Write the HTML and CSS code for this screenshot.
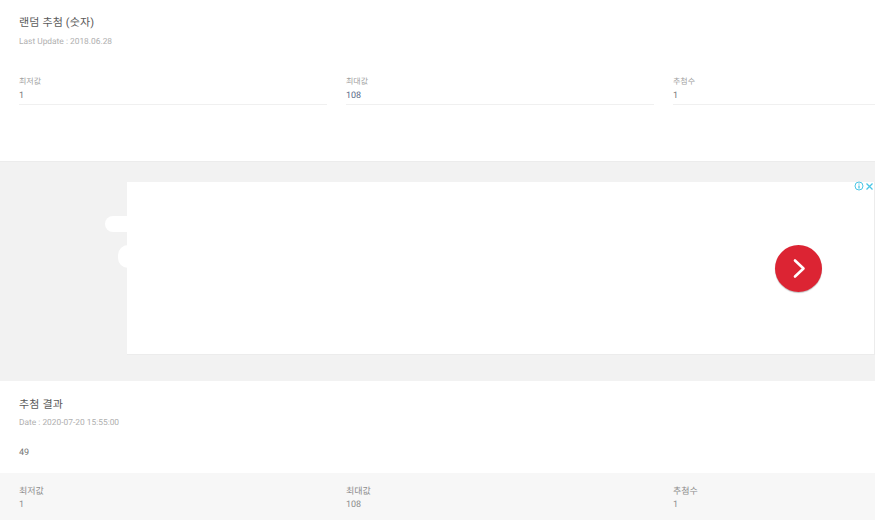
FILE: index.html
```html
<!DOCTYPE html>
<html lang="ko">
<head>
  <meta charset="utf-8">
  <title>랜덤 추첨 (숫자)</title>
  <link rel="stylesheet" href="styles.css">
</head>
<body>
  <section class="setup">
    <h2 class="title">랜덤 추첨 (숫자)</h2>
    <p class="sub">Last Update : 2018.06.28</p>
    <div class="fields">
      <div class="field">
        <div class="field-label">최저값</div>
        <div class="field-value">1</div>
      </div>
      <div class="field">
        <div class="field-label">최대값</div>
        <div class="field-value blue">108</div>
      </div>
      <div class="field">
        <div class="field-label">추첨수</div>
        <div class="field-value">1</div>
      </div>
    </div>
  </section>

  <!-- 광고 영역 -->
  <section class="ad-wrap">
    <span class="blob blob-top"></span>
    <span class="blob blob-bottom"></span>
    <div class="ad">
      <div class="ad-icons">
        <svg width="10" height="10" viewBox="0 0 10 10" fill="none" stroke="#4cc7e6">
          <circle cx="5" cy="5" r="4" stroke-width="1"/>
          <path d="M5 2.4v1.1M5 4.4v3.2" stroke-width="1.3"/>
        </svg>
        <svg width="9" height="9" viewBox="0 0 9 9" fill="none" stroke="#4cc7e6" stroke-width="1.3">
          <path d="M1.5 1.5l6 6M7.5 1.5l-6 6"/>
        </svg>
      </div>
      <div class="ad-next">
        <svg width="47" height="47" viewBox="0 0 47 47" fill="none" stroke="#fff" stroke-width="2.6" stroke-linecap="round" stroke-linejoin="round">
          <path d="M20 15.5l8.5 8-8.5 8"/>
        </svg>
      </div>
    </div>
  </section>

  <section class="result">
    <h2 class="title">추첨 결과</h2>
    <p class="sub">Date : 2020-07-20 15:55:00</p>
    <p class="number">49</p>
  </section>

  <section class="summary">
    <div class="fields">
      <div class="sum-item">
        <div class="sum-label">최저값</div>
        <div class="sum-value">1</div>
      </div>
      <div class="sum-item">
        <div class="sum-label">최대값</div>
        <div class="sum-value">108</div>
      </div>
      <div class="sum-item">
        <div class="sum-label">추첨수</div>
        <div class="sum-value">1</div>
      </div>
    </div>
  </section>
</body>
</html>
```

FILE: styles.css
```css
html, body {
  height: 520px;
  overflow: hidden;
}

body {
  margin: 0;
  background-color: #fff;
  font-family: Roboto, "Noto Sans CJK KR", sans-serif;
  color: #555;
  text-rendering: geometricPrecision;
}

h2, p {
  margin: 0;
}

.title {
  font-size: 11px;
  font-weight: 400;
  line-height: 16px;
  color: #5a5a5a;
  letter-spacing: 0.15px;
}

.sub {
  margin-top: 3px;
  font-size: 8.4px;
  line-height: 14px;
  color: #b0b0b0;
}

.fields {
  display: grid;
  grid-template-columns: 308px 308px 1fr;
  column-gap: 19px;
}

.setup {
  box-sizing: border-box;
  height: 162px;
  padding: 15px 0 0 19px;
  border-bottom: 1px solid #ececec;
}

.setup .sub {
  margin-top: 4px;
}

.setup .fields {
  margin-top: 26px;
}

.field {
  border-bottom: 1px solid #f0f0f0;
  height: 30px;
  box-sizing: border-box;
}

.field-label {
  font-size: 8px;
  line-height: 13px;
  color: #a0a0a0;
}

.field-value {
  margin-top: 2px;
  font-size: 9px;
  line-height: 13px;
  color: #777;
}

.blue {
  color: #5a6a88;
}

.ad-wrap {
  position: relative;
  display: flex;
  justify-content: flex-end;
  height: 219px;
  padding-top: 20px;
  box-sizing: border-box;
  background-color: #f2f2f2;
}

.ad {
  position: relative;
  width: 748px;
  height: 173px;
  background-color: #fff;
  border-right: 1px solid #ececec;
  border-bottom: 1px solid #ececec;
  box-sizing: border-box;
}

.blob {
  position: absolute;
  background-color: #fff;
}

.blob-top {
  left: 105px;
  top: 54px;
  width: 30px;
  height: 16px;
  border-radius: 8px;
}

.blob-bottom {
  left: 118px;
  top: 83px;
  width: 20px;
  height: 23px;
  border-radius: 11px;
}

.ad-icons {
  position: absolute;
  top: -1px;
  right: 0;
  display: flex;
  align-items: center;
  gap: 1px;
}

.ad-icons svg {
  display: block;
}

.ad-next {
  position: absolute;
  left: 648px;
  top: 63px;
  width: 47px;
  height: 47px;
  border-radius: 50%;
  background-color: #dc2433;
  box-shadow: 0 1px 1px rgba(0, 0, 0, 0.25);
}

.ad-next svg {
  display: block;
}

.result {
  box-sizing: border-box;
  height: 92px;
  padding: 16px 0 0 19px;
}

.number {
  margin-top: 16px;
  font-size: 9px;
  line-height: 14px;
  color: #777;
}

.summary {
  box-sizing: border-box;
  height: 47px;
  padding: 12px 0 0 19px;
  background-color: #f7f7f7;
}

.sum-label {
  font-size: 9px;
  line-height: 14px;
  color: #8c8c8c;
}

.sum-value {
  font-size: 9px;
  line-height: 12px;
  color: #8c8c8c;
}
```
